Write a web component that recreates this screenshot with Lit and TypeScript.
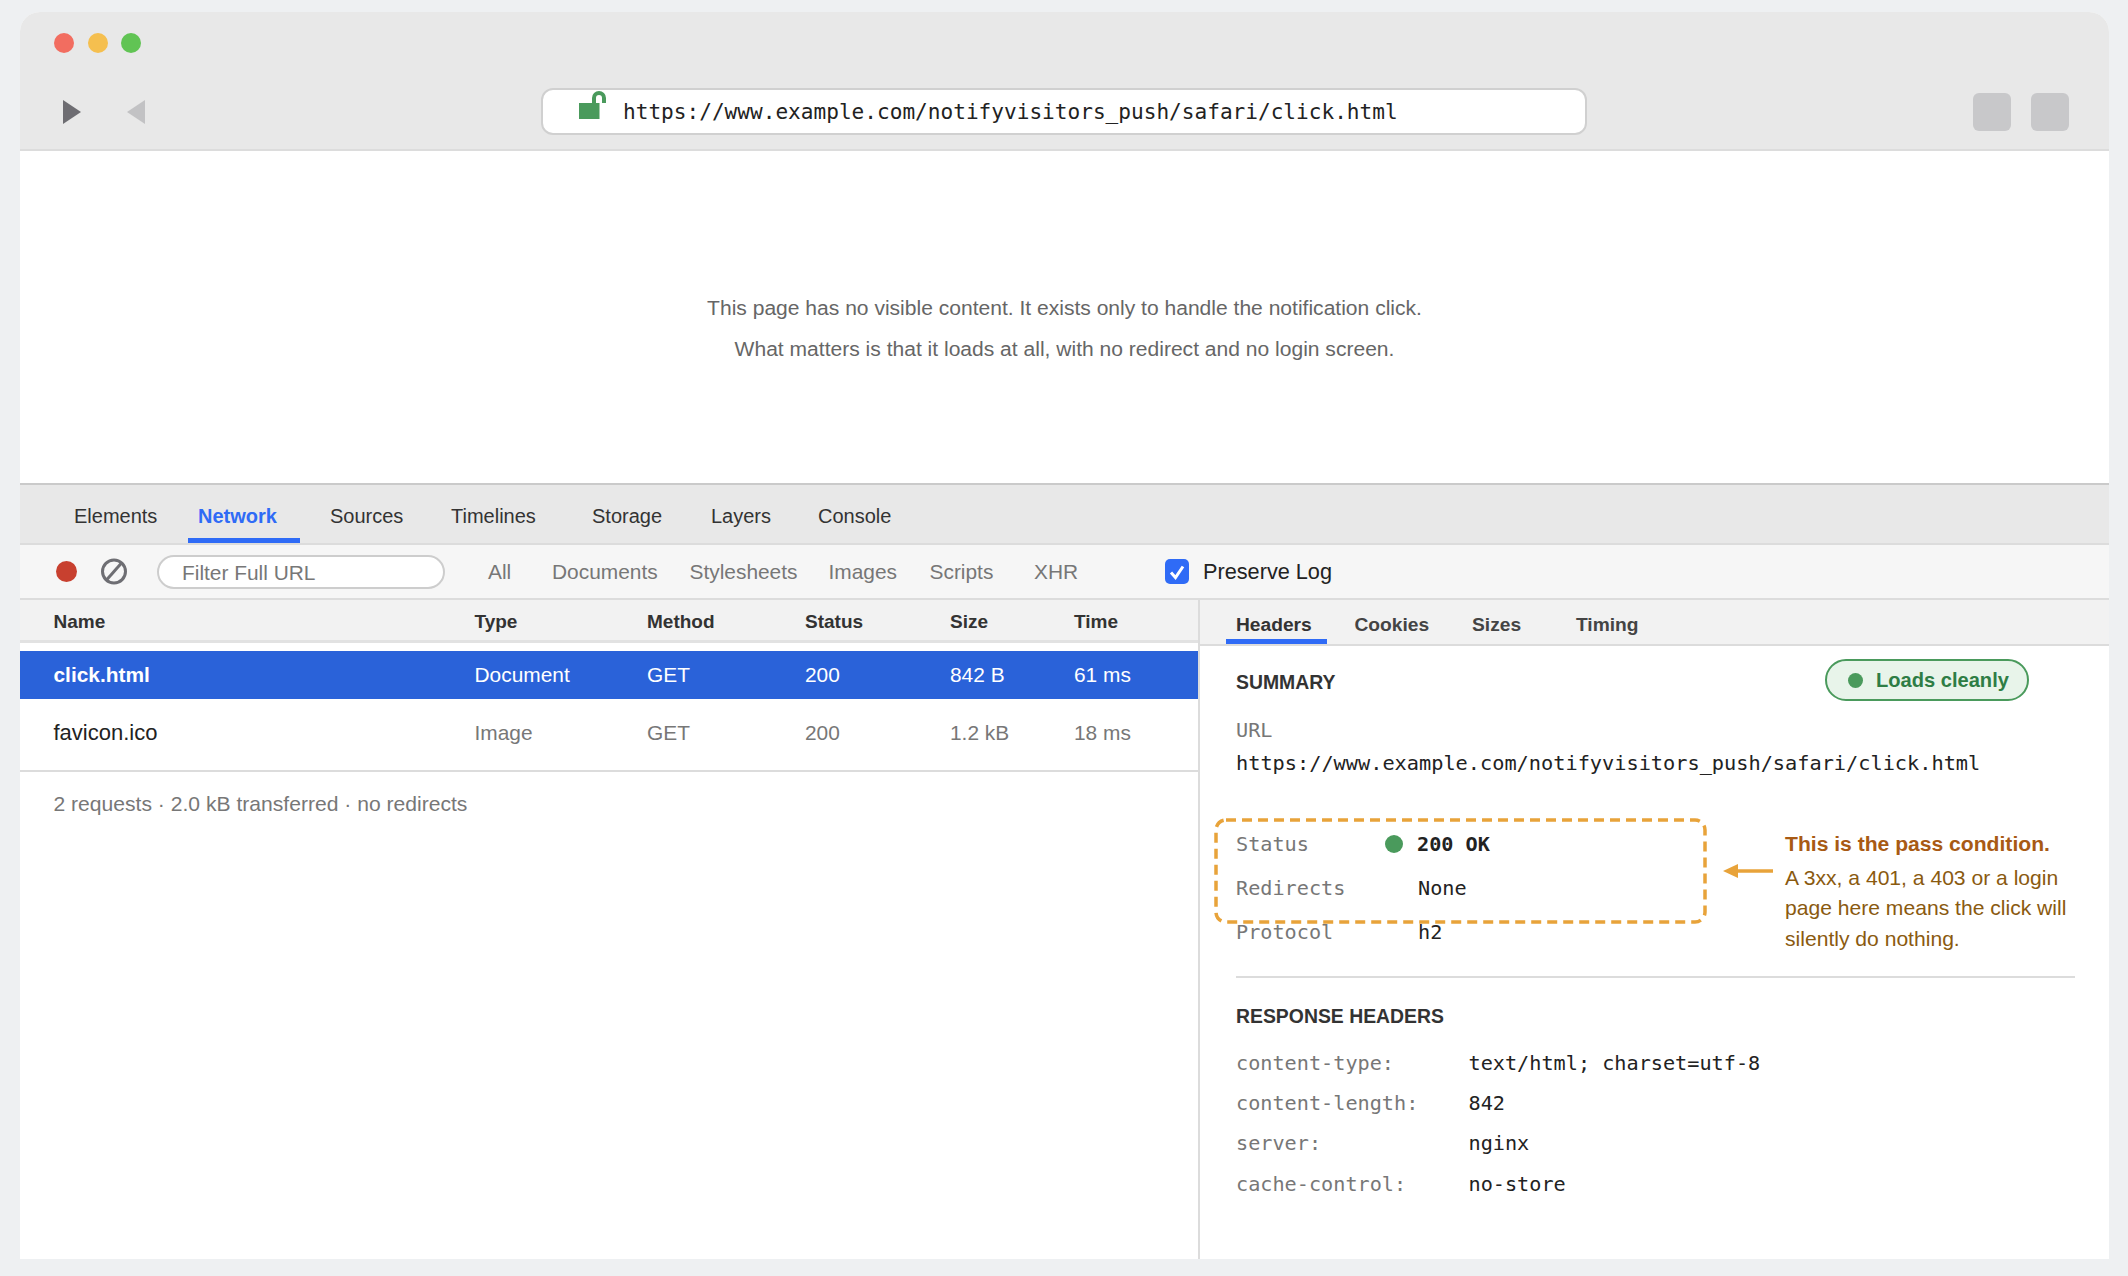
import { LitElement, html, css } from "lit";
import { customElement } from "lit/decorators.js";

const TABS = ["Elements", "Network", "Sources", "Timelines", "Storage", "Layers", "Console"];
const FILTERS = ["All", "Documents", "Stylesheets", "Images", "Scripts", "XHR"];
const COLS = ["Name", "Type", "Method", "Status", "Size", "Time"];
const URL = "https://www.example.com/notifyvisitors_push/safari/click.html";
const RESPONSE = [
  ["content-type:", "text/html; charset=utf-8"],
  ["content-length:", "842"],
  ["server:", "nginx"],
  ["cache-control:", "no-store"],
];

@customElement("app-root")
export class AppRoot extends LitElement {
  static styles = css`
    :host {
      display: block;
      height: 1276px;
      box-sizing: border-box;
      padding: 12px 19px 17px 20px;
      background: #eef0f2;
      font-family: "Liberation Sans", Arial, sans-serif;
      color: #222;
    }
    .mono {
      font-family: "DejaVu Sans Mono", monospace;
    }
    .window {
      height: 100%;
      display: flex;
      flex-direction: column;
      background: #fff;
      border-radius: 20px 20px 0 0;
      overflow: hidden;
    }

    /* browser chrome */
    .chrome {
      height: 137px;
      flex: none;
      background: #e8e8e8;
      border-bottom: 2px solid #dcdcdc;
      display: flex;
      flex-direction: column;
    }
    .lights {
      display: flex;
      gap: 13.5px;
      padding: 21px 0 0 34px;
    }
    .lights i {
      width: 20px;
      height: 20px;
      border-radius: 50%;
    }
    .toolbar {
      display: grid;
      grid-template-columns: 521px 1046px 1fr;
      align-items: center;
      margin-top: 35px;
    }
    .nav {
      display: flex;
      gap: 46px;
      padding-left: 43px;
    }
    .address {
      height: 47px;
      box-sizing: border-box;
      background: #fff;
      border: 2px solid #d0d0d0;
      border-radius: 12px;
      display: flex;
      align-items: center;
      padding-left: 36px;
      gap: 16px;
      font-size: 21.1px;
      color: #222;
    }
    .address svg {
      flex: none;
      margin-top: -13px;
    }
    .squares {
      display: flex;
      justify-content: flex-end;
      gap: 20px;
      padding-right: 40px;
    }
    .squares i {
      width: 38px;
      height: 38px;
      border-radius: 6px;
      background: #c8c8ca;
    }

    /* page */
    .page {
      height: 332px;
      flex: none;
      box-sizing: border-box;
      display: flex;
      flex-direction: column;
      align-items: center;
      gap: 19px;
      padding-top: 146px;
      font-size: 21.05px;
      line-height: 22px;
      color: #666;
    }

    /* devtools */
    .tabs {
      height: 58px;
      flex: none;
      border-top: 2px solid #cacaca;
      border-bottom: 2px solid #dcdcdc;
      background: #e8e8e8;
      display: grid;
      grid-template-columns: 124px 132px 121px 141px 119px 107px 1fr;
      padding-left: 44px;
      font-size: 20px;
      color: #333;
    }
    .tab {
      padding-left: 10px;
      line-height: 62px;
      height: 58px;
      box-sizing: border-box;
    }
    .tab.on {
      width: 112px;
      font-weight: 700;
      color: #2f6bf6;
      border-bottom: 5px solid #2f6bf6;
    }
    .filters {
      height: 53px;
      flex: none;
      background: #f6f6f6;
      border-bottom: 2px solid #dcdcdc;
      display: flex;
      align-items: center;
      font-size: 20.9px;
      color: #777;
    }
    .rec {
      width: 21px;
      height: 21px;
      border-radius: 50%;
      background: #c8402f;
      margin-left: 36px;
    }
    .ban {
      margin-left: 24px;
    }
    .search {
      margin-left: 30px;
      width: 288px;
      height: 34px;
      box-sizing: border-box;
      border: 2px solid #cdcdcd;
      border-radius: 17px;
      background: #fff;
      padding-left: 23px;
      line-height: 31px;
    }
    .kinds {
      display: grid;
      grid-template-columns: 64px 137.5px 139px 101px 104.5px 131px;
      margin-left: 43px;
    }
    .check {
      width: 24px;
      height: 25px;
      border-radius: 5px;
      background: #2f6bf6;
      display: flex;
      align-items: center;
      justify-content: center;
    }
    .preserve {
      margin-left: 14px;
      font-size: 21.7px;
      color: #222;
    }
    .split {
      flex: 1;
      min-height: 0;
      display: grid;
      grid-template-columns: 1178px 2px 1fr;
    }
    .divider {
      background: #dcdcdc;
    }

    /* request list */
    .list {
      display: flex;
      flex-direction: column;
    }
    .row {
      display: grid;
      grid-template-columns: 421px 172.5px 158px 145px 124px 1fr;
      padding-left: 33.5px;
      align-items: center;
    }
    .head {
      height: 36px;
      padding-top: 4px;
      background: #f2f2f2;
      border-bottom: 3px solid #e2e2e2;
      font-size: 19px;
      font-weight: 700;
      color: #333;
      margin-bottom: 8px;
    }
    .item {
      font-size: 20.9px;
      color: #777;
    }
    .item.sel {
      height: 48px;
      background: #2a62d9;
      color: #fff;
    }
    .item.sel b {
      font-weight: 700;
    }
    .item.plain {
      height: 68px;
      padding-bottom: 3px;
      border-bottom: 2px solid #dcdcdc;
    }
    .item.plain span:first-child {
      color: #222;
      font-size: 22px;
    }
    .foot {
      padding: 20px 0 0 33.5px;
      font-size: 21.1px;
      line-height: 24px;
      color: #777;
    }

    /* details */
    .detail {
      position: relative;
    }
    .subtabs {
      height: 44px;
      background: #f2f2f2;
      border-bottom: 2px solid #dcdcdc;
      display: grid;
      grid-template-columns: 118.5px 117.5px 104px 1fr;
      padding-left: 26px;
      font-size: 19.2px;
      font-weight: 700;
      color: #444;
    }
    .subtab {
      height: 44px;
      box-sizing: border-box;
      padding-left: 10px;
      line-height: 50px;
    }
    .subtab.on {
      width: 101px;
      color: #333;
      border-bottom: 5px solid #2f6bf6;
    }
    .body {
      padding: 0 34px 0 36px;
    }
    .sechead {
      font-size: 19.4px;
      font-weight: 700;
      color: #333;
      line-height: 24px;
    }
    .summary {
      display: flex;
      justify-content: space-between;
      align-items: center;
      height: 42px;
      margin-top: 13px;
      padding-right: 46px;
    }
    .summary .sechead {
      margin-top: 4px;
    }
    .pill {
      width: 204px;
      height: 42px;
      box-sizing: border-box;
      border: 2.5px solid #4a9a5c;
      border-radius: 21px;
      background: #e8f4ea;
      display: flex;
      align-items: center;
      gap: 13px;
      padding-left: 21px;
      font-size: 20.1px;
      font-weight: 700;
      color: #2e7d45;
    }
    .pill i {
      width: 15px;
      height: 15px;
      border-radius: 50%;
      background: #4a9a5c;
    }
    .mono-line {
      font-size: 20.2px;
      line-height: 24px;
    }
    .label {
      color: #777;
    }
    .url-label {
      margin-top: 17px;
    }
    .url-value {
      margin-top: 9px;
      color: #222;
      font-size: 20.27px;
    }
    .facts {
      display: grid;
      grid-template-columns: 182px 1fr;
      grid-auto-rows: 44px;
      margin-top: 46.5px;
      align-items: center;
      width: 420px;
    }
    .facts .ok {
      display: flex;
      align-items: center;
      gap: 14px;
      margin-left: -33px;
      font-weight: 700;
    }
    .facts .ok i {
      width: 18px;
      height: 18px;
      border-radius: 50%;
      background: #4a9a5c;
    }
    .rule {
      height: 2px;
      background: #dcdcdc;
      margin-top: 22px;
    }
    .response {
      margin-top: 26px;
    }
    .kv {
      display: grid;
      grid-template-columns: 232.5px 1fr;
      grid-auto-rows: 40.4px;
      margin-top: 15px;
      align-items: center;
    }
    .dash {
      position: absolute;
      left: 14px;
      top: 218px;
      pointer-events: none;
    }
    .pointer {
      position: absolute;
      left: 523px;
      top: 263px;
    }
    .note {
      position: absolute;
      left: 585px;
      top: 230px;
      width: 300px;
      font-size: 21.1px;
      line-height: 30.6px;
      color: #8a5a10;
    }
    .note b {
      display: block;
      color: #a85a14;
      margin-bottom: 3px;
      margin-top: -1px;
    }
  `;

  render() {
    return html`
      <div class="window">
        <div class="chrome">
          <div class="lights">
            <i style="background:#f26d60"></i>
            <i style="background:#f5bf4f"></i>
            <i style="background:#61c454"></i>
          </div>
          <div class="toolbar">
            <div class="nav">
              <svg width="18" height="24" viewBox="0 0 18 24"><path d="M0 0 18 12 0 24Z" fill="#6e6d72" /></svg>
              <svg width="18" height="24" viewBox="0 0 18 24"><path d="M18 0 0 12 18 24Z" fill="#c2c2c4" /></svg>
            </div>
            <div class="address mono">
              <svg width="28" height="28" viewBox="0 0 28 28">
                <path d="M15 13V7a5 5 0 0 1 10 0V12" fill="none" stroke="#4a9a5c" stroke-width="4" />
                <rect x="0" y="12" width="20.5" height="16" fill="#4a9a5c" />
              </svg>
              <span>${URL}</span>
            </div>
            <div class="squares"><i></i><i></i></div>
          </div>
        </div>

        <div class="page">
          <div>This page has no visible content. It exists only to handle the notification click.</div>
          <div>What matters is that it loads at all, with no redirect and no login screen.</div>
        </div>

        <div class="tabs">
          ${TABS.map((t) => html`<div class="tab ${t === "Network" ? "on" : ""}">${t}</div>`)}
        </div>

        <div class="filters">
          <div class="rec"></div>
          <svg class="ban" width="26" height="27" viewBox="0 0 26 27">
            <circle cx="13" cy="13.5" r="11.5" fill="none" stroke="#6e6e73" stroke-width="3" />
            <path d="M5.5 22 20.5 5" stroke="#6e6e73" stroke-width="3" />
          </svg>
          <div class="search">Filter Full URL</div>
          <div class="kinds">${FILTERS.map((f) => html`<span>${f}</span>`)}</div>
          <div class="check">
            <svg width="18" height="18" viewBox="0 0 18 18">
              <path d="M3 9.5 7.5 14.5 15 3.5" fill="none" stroke="#fff" stroke-width="3" />
            </svg>
          </div>
          <div class="preserve">Preserve Log</div>
        </div>

        <div class="split">
          <div class="list">
            <div class="row head">${COLS.map((c) => html`<span>${c}</span>`)}</div>
            <div class="row item sel">
              <b>click.html</b><span>Document</span><span>GET</span><span>200</span><span>842 B</span><span>61 ms</span>
            </div>
            <div class="row item plain">
              <span>favicon.ico</span><span>Image</span><span>GET</span><span>200</span><span>1.2 kB</span><span>18 ms</span>
            </div>
            <div class="foot">2 requests · 2.0 kB transferred · no redirects</div>
          </div>

          <div class="divider"></div>

          <div class="detail">
            <div class="subtabs">
              <div class="subtab on">Headers</div>
              <div class="subtab">Cookies</div>
              <div class="subtab">Sizes</div>
              <div class="subtab">Timing</div>
            </div>
            <div class="body">
              <div class="summary">
                <div class="sechead">SUMMARY</div>
                <div class="pill"><i></i>Loads cleanly</div>
              </div>
              <div class="mono mono-line label url-label">URL</div>
              <div class="mono mono-line url-value">${URL}</div>
              <div class="facts mono mono-line">
                <span class="label">Status</span>
                <span class="ok"><i></i>200 OK</span>
                <span class="label">Redirects</span>
                <span>None</span>
                <span class="label">Protocol</span>
                <span>h2</span>
              </div>
              <div class="rule"></div>
              <div class="sechead response">RESPONSE HEADERS</div>
              <div class="kv mono mono-line">
                ${RESPONSE.map(
                  ([k, v]) => html`<span class="label">${k}</span><span>${v}</span>`
                )}
              </div>
            </div>

            <svg class="dash" width="493" height="106" viewBox="0 0 493 106">
              <rect x="2" y="2" width="489" height="102" rx="10" fill="none" stroke="#e8a33a" stroke-width="3.5" stroke-dasharray="10 6" />
            </svg>
            <svg class="pointer" width="50" height="16" viewBox="0 0 50 16">
              <path d="M50 8H12" stroke="#e8a33a" stroke-width="3.5" />
              <path d="M0 8 15 1V15Z" fill="#e8a33a" />
            </svg>
            <div class="note">
              <b>This is the pass condition.</b>
              A 3xx, a 401, a 403 or a login<br />
              page here means the click will<br />
              silently do nothing.
            </div>
          </div>
        </div>
      </div>
    `;
  }
}
